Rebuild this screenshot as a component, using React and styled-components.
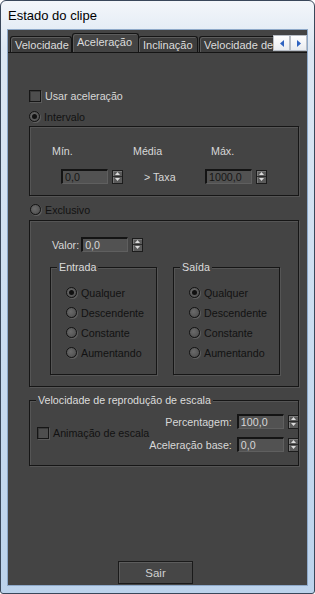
import React from "react";
import styled, { createGlobalStyle, css } from "styled-components";

// ===== Global =====
const GlobalStyle = createGlobalStyle`
  html, body { margin: 0; padding: 0; background: #ffffff; }
  * { box-sizing: border-box; }
`;

const uiFont = `"Liberation Sans", Arial, sans-serif`;
const textSize = "10.7px";

// ===== Window chrome =====
const Window = styled.div`
  width: 315px;
  height: 594px;
  display: flex;
  flex-direction: column;
  border: 1px solid #39475a;
  border-radius: 6px 6px 3px 3px;
  background: linear-gradient(180deg, #f3f6fa 0%, #dce7f3 8%, #c9dcf0 60%, #bcd3ec 100%);
  padding: 0 6px 7px 6px;
  font-family: ${uiFont};
  font-size: ${textSize};
`;

const TitleBar = styled.div`
  height: 28px;
  display: flex;
  align-items: center;
  padding-left: 1px;
  font-size: 13px;
  color: #000;
`;

const Client = styled.div`
  flex: 1;
  display: flex;
  flex-direction: column;
  background: #444444;
  border: 1px solid #8ea9c9;
`;

// ===== Tabs =====
const TabStrip = styled.div`
  height: 22px;
  display: flex;
  align-items: flex-end;
  padding-left: 2px;
`;

const TabRow = styled.div`
  flex: 1;
  display: flex;
  align-items: flex-end;
  overflow: hidden;
  height: 100%;
`;

const Tab = styled.div`
  flex: none;
  width: ${({ $w }) => $w}px;
  height: 16px;
  padding-left: 4px;
  display: flex;
  align-items: center;
  color: #dcdcdc;
  font-size: 11px;
  white-space: nowrap;
  background: #3d3d3d;
  border: 1px solid #151515;
  border-bottom: none;
  border-radius: 3px 3px 0 0;
  box-shadow: inset 1px 1px 0 #5c5c5c;
  margin-right: 1px;
  ${({ $active }) =>
    $active &&
    css`
      height: 19px;
      background: #444444;
      padding-bottom: 3px;
      margin: 0 -1px 0 -1px;
      position: relative;
      z-index: 1;
    `}
`;

const ArrowPair = styled.div`
  flex: none;
  display: flex;
  align-self: center;
  margin-top: 4px;
  height: 16px;
`;

const ArrowButton = styled.div`
  width: 17px;
  height: 16px;
  display: flex;
  align-items: center;
  justify-content: center;
  background: linear-gradient(180deg, #ffffff, #e8ebef);
  border: 1px solid #b8bec6;
`;

// ===== Panel =====
const Panel = styled.div`
  flex: 1;
  display: flex;
  flex-direction: column;
  border-top: 1px solid #151515;
  padding-left: 21px;
`;

const OptionRow = styled.label`
  display: flex;
  align-items: center;
  gap: 4px;
  height: 13px;
  margin-top: ${({ $mt }) => $mt || 0}px;
  margin-left: ${({ $ml }) => $ml || 0}px;
  color: ${({ $dim }) => ($dim ? "#121212" : "#d8d8d8")};
  font-size: ${textSize};
  white-space: nowrap;
`;

const CheckBox = styled.span`
  width: 12px;
  height: 12px;
  flex: none;
  border: 1px solid #161616;
  background: #4e4e4e;
  box-shadow: inset 1px 1px 0 #3a3a3a, 1px 1px 0 #5a5a5a;
`;

const Radio = styled.span`
  width: 11px;
  height: 11px;
  flex: none;
  border-radius: 50%;
  border: 1px solid #141414;
  background: radial-gradient(circle at 40% 40%, #6a6a6a, #4a4a4a);
  box-shadow: 1px 1px 0 #5e5e5e;
  display: flex;
  align-items: center;
  justify-content: center;

  &::after {
    content: "";
    width: 5px;
    height: 5px;
    border-radius: 50%;
    background: ${({ $on }) => ($on ? "#111" : "transparent")};
  }
`;

const Group = styled.div`
  position: relative;
  width: ${({ $w }) => $w}px;
  height: ${({ $h }) => $h}px;
  margin-top: ${({ $mt }) => $mt || 0}px;
  border: 1px solid #161616;
  box-shadow: 1px 1px 0 #555, inset 1px 1px 0 #555;
  flex: none;
`;

const Legend = styled.span`
  position: absolute;
  top: -7px;
  left: 6px;
  padding: 0 2px;
  background: #444444;
  color: #dcdcdc;
  font-size: ${textSize};
  line-height: 13px;
  white-space: nowrap;
`;

const Label = styled.span`
  color: #d8d8d8;
  font-size: ${textSize};
  white-space: nowrap;
  margin-right: ${({ $mr }) => $mr || 0}px;
`;

// ===== Interval group =====
const HeadRow = styled.div`
  display: grid;
  grid-template-columns: 81px 78px auto;
  padding-left: 22px;
  margin-top: 17px;
  height: 13px;
  align-items: center;
`;

const FieldRow = styled.div`
  display: flex;
  align-items: center;
  padding-left: ${({ $pl }) => $pl || 0}px;
  margin-top: ${({ $mt }) => $mt || 0}px;
`;

const TaxaCell = styled.span`
  width: 62px;
  margin-left: 20px;
  color: #d8d8d8;
  font-size: ${textSize};
  padding-left: 1px;
`;

const NumInput = styled.div`
  width: 47px;
  height: 15px;
  flex: none;
  display: flex;
  align-items: center;
  padding-left: 2px;
  background: #525252;
  border-top: 2px solid #141414;
  border-left: 2px solid #141414;
  border-right: 1px solid #5f5f5f;
  border-bottom: 1px solid #5f5f5f;
  color: ${({ $dim }) => ($dim ? "#161616" : "#d6d6d6")};
  font-size: ${textSize};
`;

const SpinBox = styled.div`
  width: 11px;
  height: 14px;
  flex: none;
  margin-left: 4px;
  display: flex;
  flex-direction: column;
  background: #5a5a5a;
  border: 1px solid #1c1c1c;
  box-shadow: inset 1px 1px 0 #7a7a7a;
`;

const SpinHalf = styled.div`
  flex: 1;
  display: flex;
  align-items: center;
  justify-content: center;
  & + & {
    border-top: 1px solid #2a2a2a;
  }
`;

// ===== Exclusive group =====
const SubGroups = styled.div`
  display: flex;
  gap: 16px;
  padding-left: 20px;
  margin-top: 15px;
`;

const RadioList = styled.div`
  display: flex;
  flex-direction: column;
  gap: 7px;
  padding: 18px 0 0 15px;
`;

// ===== Scale group =====
const ScaleBody = styled.div`
  display: flex;
  align-items: center;
  justify-content: space-between;
  padding: 13px 3px 0 7px;
`;

const ScaleFields = styled.div`
  flex: none;
  display: flex;
  flex-direction: column;
  gap: 8px;
  align-items: flex-end;
`;

const ScaleLabel = styled.span`
  color: #d8d8d8;
  font-size: ${textSize};
  margin-right: 5px;
  white-space: nowrap;
`;

const Footer = styled.div`
  margin-top: auto;
  padding: 0 0 1px 89px;
`;

const Button = styled.div`
  width: 75px;
  height: 23px;
  display: flex;
  align-items: center;
  justify-content: center;
  color: #d0d0d0;
  font-size: 11.5px;
  background: #464646;
  border: 1px solid #1a1a1a;
  box-shadow: inset 1px 1px 0 #5c5c5c;
`;

// ===== Small drawings =====
const Tri = ({ dir, color = "#dcdcdc", size = 5 }) => {
  const pts = {
    up: `0,${size - 2} ${size / 2},0 ${size},${size - 2}`,
    down: `0,0 ${size / 2},${size - 2} ${size},0`,
    left: `4,0 0,3.5 4,7`,
    right: `0,0 4,3.5 0,7`,
  }[dir];
  const horiz = dir === "left" || dir === "right";
  return (
    <svg width={horiz ? 4 : size} height={horiz ? 7 : size - 2}>
      <polygon points={pts} fill={color} />
    </svg>
  );
};

const Spinner = () => (
  <SpinBox>
    <SpinHalf>
      <Tri dir="up" />
    </SpinHalf>
    <SpinHalf>
      <Tri dir="down" />
    </SpinHalf>
  </SpinBox>
);

const Field = ({ value, dim }) => (
  <>
    <NumInput $dim={dim}>{value}</NumInput>
    <Spinner />
  </>
);

const directions = ["Qualquer", "Descendente", "Constante", "Aumentando"];

const DirectionGroup = ({ title }) => (
  <Group $w={107} $h={108}>
    <Legend>{title}</Legend>
    <RadioList>
      {directions.map((d, i) => (
        <OptionRow key={d} $dim>
          <Radio $on={i === 0} />
          {d}
        </OptionRow>
      ))}
    </RadioList>
  </Group>
);

export default function App() {
  return (
    <>
      <GlobalStyle />
      <Window>
        <TitleBar>Estado do clipe</TitleBar>
        <Client>
          <TabStrip>
            <TabRow>
              <Tab $w={62}>Velocidade</Tab>
              <Tab $w={67} $active>
                Aceleração
              </Tab>
              <Tab $w={60}>Inclinação</Tab>
              <Tab $w={80}>Velocidade de</Tab>
            </TabRow>
            <ArrowPair>
              <ArrowButton>
                <Tri dir="left" color="#2f63c0" />
              </ArrowButton>
              <ArrowButton>
                <Tri dir="right" color="#2f63c0" />
              </ArrowButton>
            </ArrowPair>
          </TabStrip>

          <Panel>
            <OptionRow $mt={36}>
              <CheckBox />
              Usar aceleração
            </OptionRow>
            <OptionRow $mt={8} $dim>
              <Radio $on />
              Intervalo
            </OptionRow>

            <Group $w={270} $h={70} $mt={3}>
              <HeadRow>
                <Label>Mín.</Label>
                <Label>Média</Label>
                <Label>Máx.</Label>
              </HeadRow>
              <FieldRow $pl={31} $mt={12}>
                <Field value="0,0" dim />
                <TaxaCell>&gt; Taxa</TaxaCell>
                <Field value="1000,0" dim />
              </FieldRow>
            </Group>

            <OptionRow $mt={7} $ml={1} $dim>
              <Radio />
              Exclusivo
            </OptionRow>

            <Group $w={270} $h={167} $mt={4}>
              <FieldRow $pl={22} $mt={16}>
                <Label $mr={2}>Valor:</Label>
                <Field value="0,0" />
              </FieldRow>
              <SubGroups>
                <DirectionGroup title="Entrada" />
                <DirectionGroup title="Saída" />
              </SubGroups>
            </Group>

            <Group $w={270} $h={66} $mt={13}>
              <Legend>Velocidade de reprodução de escala</Legend>
              <ScaleBody>
                <OptionRow $dim>
                  <CheckBox />
                  Animação de escala
                </OptionRow>
                <ScaleFields>
                  <FieldRow>
                    <ScaleLabel>Percentagem:</ScaleLabel>
                    <Field value="100,0" />
                  </FieldRow>
                  <FieldRow>
                    <ScaleLabel>Aceleração base:</ScaleLabel>
                    <Field value="0,0" />
                  </FieldRow>
                </ScaleFields>
              </ScaleBody>
            </Group>

            <Footer>
              <Button>Sair</Button>
            </Footer>
          </Panel>
        </Client>
      </Window>
    </>
  );
}
